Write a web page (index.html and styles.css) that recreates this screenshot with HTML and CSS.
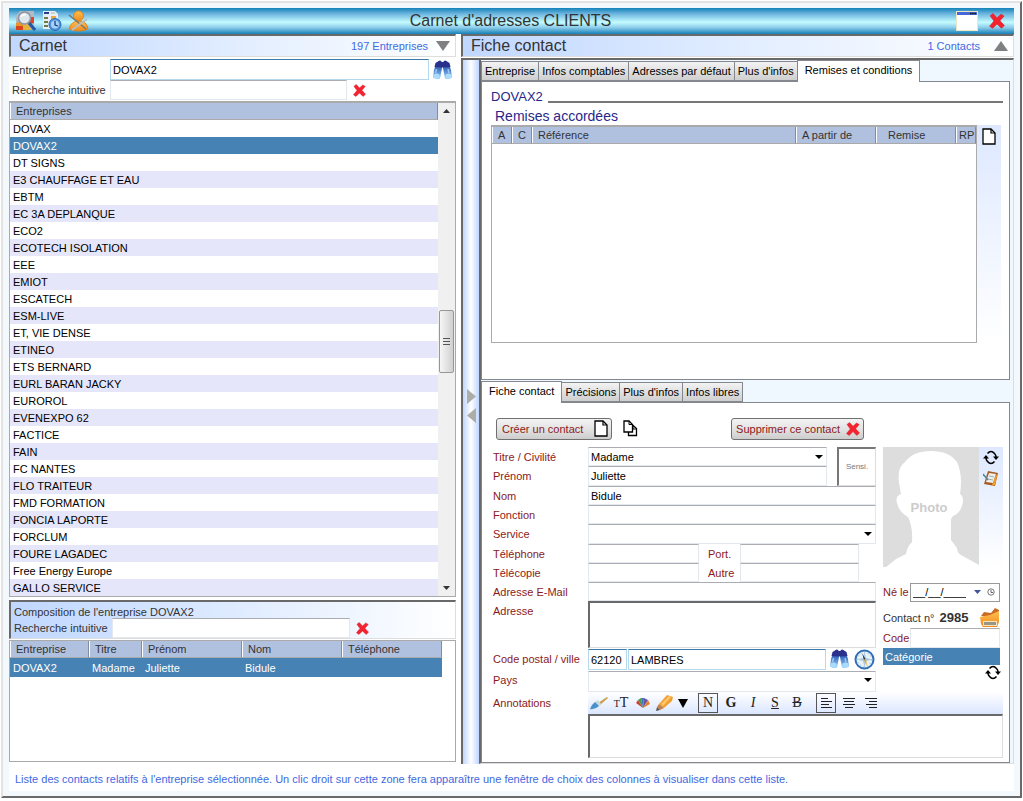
FILE: index.html
```html
<!DOCTYPE html>
<html lang="fr">
<head>
<meta charset="utf-8">
<title>Carnet d'adresses CLIENTS</title>
<link rel="stylesheet" href="styles.css">
</head>
<body>
<svg class="defs" aria-hidden="true">
  <defs>
    <linearGradient id="lens" x1="0" y1="0" x2="0" y2="1"><stop offset="0" stop-color="#2b3f9a"/><stop offset=".45" stop-color="#3f74c4"/><stop offset="1" stop-color="#a5d8fa"/></linearGradient>
    <linearGradient id="gold" x1="0" y1="0" x2="0" y2="1"><stop offset="0" stop-color="#ffc050"/><stop offset="1" stop-color="#f08a1c"/></linearGradient>
    <symbol id="i-cross" viewBox="0 0 14 14"><path d="M1 2.5 3.5 0.5 7 4.2 10.5 1 13.2 2.6 9.6 6.8 13.5 11 10.8 13.4 7 9.6 3.2 13.4 0.5 11.6 4.3 7Z" fill="#f5222f" stroke="#d5202a" stroke-width=".5"/></symbol>
    <symbol id="i-binoculars" viewBox="0 0 20 20"><path d="M4 3 8 .5 9.500 3V8L7.500 18.500Q4.500 20 .5 17.500L1.500 10Z" fill="url(#lens)"/><path d="M16 3 12 .5 10.500 3V8L12.500 18.500Q15.500 20 19.500 17.500L18.500 10Z" fill="url(#lens)"/><path d="M3 3 7 .5 9.500 2H10.500L13 .5 17 3 18 7 11 7.500H9L2 7Z" fill="#29318c"/><ellipse cx="4" cy="16" rx="3.200" ry="2.600" fill="#a9dcfa"/><ellipse cx="16" cy="16" rx="3.200" ry="2.600" fill="#a9dcfa"/><path d="M4 9 3 13M15.500 9 16.500 13" stroke="#9ec8ee" stroke-width="1.500"/></symbol>
    <symbol id="i-page" viewBox="0 0 14 17"><path d="M1 1H9L13 5V16H1Z" fill="#fff" stroke="#000" stroke-width="1.300"/><path d="M9 1V5H13" fill="none" stroke="#000" stroke-width="1.200"/></symbol>
    <symbol id="i-refresh" viewBox="0 0 16 15"><path d="M4.500 3.500Q8-.5 11.500 3.500Q13 5 13 7M11.500 11.500Q8 15.500 4.500 11.500Q3 10 3 8" fill="none" stroke="#000" stroke-width="1.600"/><path d="M10 6.500H16L13 10ZM0 8.500H6L3 5Z" fill="#000"/></symbol>
    <symbol id="i-up" viewBox="0 0 14 10"><path d="M7 0 14 10H0Z" fill="#808080"/></symbol>
  </defs>
</svg>

<main class="window">
  <header class="titlebar">
    <div class="tools">
      <button class="icon-btn" type="button" aria-label="Aperçu"><svg width="21" height="22" viewBox="0 0 21 22"><path d="M5 1H19V19H1V6Z" fill="#b4bac3"/><path d="M1 13 7 11 9 19H1Z" fill="#e89530"/><path d="M1 16H8L9 20H1Z" fill="#d9441d"/><path d="M14 7H19V13L15 14Z" fill="#e0452b"/><path d="M8 15 14 13 16 20H8Z" fill="#e8b33d"/><circle cx="9.500" cy="8" r="6" fill="#dfe6ec" stroke="#8b949f" stroke-width="1.500"/><path d="M6 7Q7 4 11 5" fill="none" stroke="#fff" stroke-width="1.500"/><path d="M14 13 20 20" stroke="#2256a8" stroke-width="3"/></svg></button>
      <button class="icon-btn" type="button" aria-label="Historique"><svg width="20" height="22" viewBox="0 0 20 22"><path d="M1 1H13L16 4V19H1Z" fill="#e8eef3"/><path d="M2 3H7" stroke="#233f94" stroke-width="2"/><path d="M9 3H13" stroke="#a9b4c0"/><path d="M2 8H6M2 12H6M2 16H6" stroke="#6c7c43" stroke-width="2"/><path d="M9 6H14V9H9Z" fill="#f0a834"/><circle cx="13" cy="14.500" r="6" fill="#4f93dc" stroke="#2c6cbb"/><circle cx="13" cy="14.500" r="4" fill="#a8d2f6"/><path d="M13 11V15L16 16" fill="none" stroke="#173f85" stroke-width="1.300"/></svg></button>
      <button class="icon-btn" type="button" aria-label="Paramètres du contact"><svg width="21" height="22" viewBox="0 0 21 22"><path d="M1 19Q3 11 11 11Q19 11 20 19Q11 23 1 19Z" fill="url(#gold)" stroke="#dc8519"/><circle cx="10.500" cy="6" r="5" fill="url(#gold)" stroke="#dc8519"/><path d="M1 5 18 19" stroke="#70757b" stroke-width="1.500"/><path d="M19 9 4 20" stroke="#b9bec3" stroke-width="2"/></svg></button>
    </div>
    <h1>Carnet d'adresses CLIENTS</h1>
    <div class="tools tools-end">
      <button class="icon-btn" type="button" aria-label="Agrandir"><svg width="22" height="20" viewBox="0 0 22 20"><path d="M0 0H22V20H0Z" fill="#ece6c6"/><path d="M1 4H21V19H1Z" fill="#fff"/><path d="M1 1H21V4H1Z" fill="#4468d8"/><path d="M14 2.500H20" stroke="#111" stroke-width="1.500" stroke-dasharray="1.500 .7"/></svg></button>
      <button class="icon-btn" type="button" aria-label="Fermer"><svg width="18" height="16"><use href="#i-cross" width="18" height="16"/></svg></button>
    </div>
  </header>

  <div class="columns">
    <section class="left">
      <div class="section-head"><h2>Carnet</h2><span class="count">197 Entreprises</span><svg class="flip" width="14" height="10"><use href="#i-up"/></svg></div>
      <div class="search-row"><label for="ent">Entreprise</label><input id="ent" class="focus" value="DOVAX2"><button class="icon-btn" type="button" aria-label="Rechercher"><svg width="21" height="20"><use href="#i-binoculars"/></svg></button></div>
      <div class="search-row short"><label for="rech">Recherche intuitive</label><input id="rech"><button class="icon-btn" type="button" aria-label="Effacer"><svg width="13" height="13"><use href="#i-cross"/></svg></button></div>

      <div class="list-frame">
        <table class="companies">
          <thead><tr><th>Entreprises</th></tr></thead>
          <tbody>
            <tr><td>DOVAX</td></tr><tr class="selected"><td>DOVAX2</td></tr><tr><td>DT SIGNS</td></tr><tr><td>E3 CHAUFFAGE ET EAU</td></tr><tr><td>EBTM</td></tr><tr><td>EC 3A DEPLANQUE</td></tr><tr><td>ECO2</td></tr><tr><td>ECOTECH ISOLATION</td></tr><tr><td>EEE</td></tr><tr><td>EMIOT</td></tr><tr><td>ESCATECH</td></tr><tr><td>ESM-LIVE</td></tr><tr><td>ET, VIE DENSE</td></tr><tr><td>ETINEO</td></tr><tr><td>ETS BERNARD</td></tr><tr><td>EURL BARAN JACKY</td></tr><tr><td>EUROROL</td></tr><tr><td>EVENEXPO 62</td></tr><tr><td>FACTICE</td></tr><tr><td>FAIN</td></tr><tr><td>FC NANTES</td></tr><tr><td>FLO TRAITEUR</td></tr><tr><td>FMD FORMATION</td></tr><tr><td>FONCIA LAPORTE</td></tr><tr><td>FORCLUM</td></tr><tr><td>FOURE LAGADEC</td></tr><tr><td>Free Energy Europe</td></tr><tr><td>GALLO SERVICE</td></tr>
          </tbody>
        </table>
        <div class="scrollbar">
          <svg width="7" height="4" viewBox="0 0 7 4"><path d="M3.500 0 7 4H0Z" fill="#333"/></svg>
          <div class="track"><div class="thumb"><i></i><i></i><i></i></div></div>
          <svg width="7" height="4" viewBox="0 0 7 4"><path d="M3.500 4 7 0H0Z" fill="#333"/></svg>
        </div>
      </div>

      <div class="composition">
        <p>Composition de l'entreprise DOVAX2</p>
        <div class="search-row short"><label for="rech2">Recherche intuitive</label><input id="rech2"><button class="icon-btn" type="button" aria-label="Effacer"><svg width="13" height="13"><use href="#i-cross"/></svg></button></div>
      </div>
      <div class="people-frame">
        <table class="people">
          <thead><tr><th class="w-company">Entreprise</th><th class="w-title">Titre</th><th>Prénom</th><th>Nom</th><th>Téléphone</th></tr></thead>
          <tbody><tr class="selected"><td>DOVAX2</td><td>Madame</td><td>Juliette</td><td>Bidule</td><td></td></tr></tbody>
        </table>
      </div>
    </section>

    <section class="right">
      <div class="section-head"><h2>Fiche contact</h2><span class="count">1 Contacts</span><svg width="14" height="10"><use href="#i-up"/></svg></div>
      <div class="right-body">
        <div class="splitter"><svg width="9" height="34" viewBox="0 0 9 34"><path d="M0 0V15L9 7.500ZM9 19V34L0 26.500Z" fill="#acaca8"/></svg></div>
        <div class="panels">
          <div class="tabs" role="tablist">
            <button type="button" role="tab">Entreprise</button><button type="button" role="tab">Infos comptables</button><button type="button" role="tab">Adresses par défaut</button><button type="button" role="tab">Plus d'infos</button><button type="button" role="tab" class="active" aria-selected="true">Remises et conditions</button>
          </div>
          <div class="panel discounts">
            <h3 class="ruled">DOVAX2</h3>
            <h4>Remises accordées</h4>
            <div class="grid-area">
              <div class="grid-frame">
                <table class="grid">
                  <thead><tr><th class="w-flag">A</th><th class="w-flag">C</th><th>Référence</th><th class="w-num">A partir de</th><th class="w-num inset">Remise</th><th class="w-flag rp">RP</th></tr></thead>
                </table>
              </div>
              <div class="side-strip"><button class="icon-btn" type="button" aria-label="Nouvelle remise"><svg width="14" height="17"><use href="#i-page"/></svg></button></div>
            </div>
          </div>

          <div class="tabs" role="tablist">
            <button type="button" role="tab" class="active" aria-selected="true">Fiche contact</button><button type="button" role="tab">Précisions</button><button type="button" role="tab">Plus d'infos</button><button type="button" role="tab">Infos libres</button>
          </div>
          <div class="panel contact">
            <div class="actions">
              <button type="button" class="action">Créer un contact<svg width="14" height="17"><use href="#i-page"/></svg></button>
              <button type="button" class="icon-btn" aria-label="Dupliquer"><svg width="15" height="17" viewBox="0 0 15 17"><path d="M5.500 5.500H10L13.500 8.500V15.500H5.500Z" fill="#fff" stroke="#000" stroke-width="1.300"/><path d="M1 1H6L9.500 4.500V12H1Z" fill="#fff" stroke="#000" stroke-width="1.300"/><path d="M6 1V4.500H9.500M10 5.500V9H13.500" fill="none" stroke="#000"/></svg></button>
              <button type="button" class="action delete">Supprimer ce contact<svg width="14" height="14"><use href="#i-cross"/></svg></button>
            </div>

            <div class="card">
              <div class="fields">
                <label for="titre">Titre / Civilité</label><span class="pick civility"><select id="titre"><option>Madame</option></select></span>
                <button type="button" class="sensi">Sensi.</button>
                <label for="prenom">Prénom</label><input id="prenom" class="civility" value="Juliette">
                <label for="nom">Nom</label><input id="nom" class="full" value="Bidule">
                <label for="fonction">Fonction</label><input id="fonction" class="full">
                <label for="service">Service</label><span class="pick full"><select id="service"><option></option></select></span>
                <label for="tel">Téléphone</label><div class="phones full"><input id="tel"><label for="port">Port.</label><input id="port"></div>
                <label for="fax">Télécopie</label><div class="phones full"><input id="fax"><label for="autre">Autre</label><input id="autre"></div>
                <label for="mail">Adresse E-Mail</label><input id="mail" class="full" type="email">
                <label for="adresse">Adresse</label><textarea id="adresse" class="full"></textarea>
                <label for="cp">Code postal / ville</label>
                <div class="town full"><input id="cp" class="focus zip" value="62120"><input class="focus" aria-label="Ville" value="LAMBRES">
                  <button class="icon-btn" type="button" aria-label="Rechercher la ville"><svg width="21" height="20"><use href="#i-binoculars"/></svg></button>
                  <button class="icon-btn" type="button" aria-label="Itinéraire"><svg width="21" height="21" viewBox="0 0 21 21"><circle cx="10.500" cy="10.500" r="9" fill="#e7f2f8" stroke="#2f6eb5" stroke-width="2"/><circle cx="10.500" cy="10.500" r="7" fill="none" stroke="#85acd2" stroke-dasharray="1 2.600"/><path d="M10.500 3 12 9 18 10.500 12 12 10.500 18 9 12 3 10.500 9 9Z" fill="#a9c7de"/><path d="M8 4 11.500 10 10 11Z" fill="#334"/><path d="M13 17 10 11 12 10Z" fill="#e5a52a"/></svg></button></div>
                <label for="pays">Pays</label><span class="pick full country"><select id="pays"><option></option></select></span>
              </div>

              <aside class="side">
                <div class="photo-row">
                  <svg class="photo" width="96" height="120" viewBox="0 0 96 120" role="img" aria-label="Photo"><path d="M0 0H96V118L78 108Q74 106 74 101L68 93V72L70 69Q78 66 80 55Q80 48 77 47Q80 28 74 15Q66 4 48 4Q30 4 22 15Q14 20 16 36L18 47Q12 49 14 56Q16 65 25 70Q30 80 29 95Q24 100 23 107L13 112L3 120H0Z" fill="#ddd"/><text x="46" y="65" text-anchor="middle">Photo</text></svg>
                  <div class="side-strip">
                    <button class="icon-btn" type="button" aria-label="Actualiser"><svg width="16" height="15"><use href="#i-refresh"/></svg></button>
                    <button class="icon-btn" type="button" aria-label="Coller"><svg width="16" height="16" viewBox="0 0 16 16"><path d="M5 0 15 2 12 15 1 13Z" fill="#a85a22"/><path d="M6 2 13 3 10 12 3 11Z" fill="#eef0ef"/><path d="M10 12 13 3 14 5 12 14 8 15Z" fill="#eea02c"/><path d="M6 5 11 6M5 8 10 9" stroke="#a6a9ac"/><path d="M0 3 5 9" stroke="#4f86a1" stroke-width="1.500"/></svg></button>
                  </div>
                </div>
                <div class="side-row born"><label for="ne">Né le</label><span class="date"><input id="ne" value="__/__/____"><svg width="7" height="4" viewBox="0 0 7 4"><path d="M0 0H7L3.500 4Z" fill="#44549a"/></svg><svg width="8" height="8" viewBox="0 0 8 8"><circle cx="4" cy="4" r="3.200" fill="#fff" stroke="#777"/><path d="M4 2V4.500H6" fill="none" stroke="#666"/></svg></span></div>
                <div class="side-row number"><span>Contact n°</span><strong>2985</strong><button class="icon-btn" type="button" aria-label="Code-barres"><svg width="20" height="20" viewBox="0 0 20 20"><path d="M1 8 4 4 11 5 15 0 19 2V10Z" fill="#c96b25"/><path d="M0 9 10 7 19 3V14L17 19H3L1 16Z" fill="url(#gold)"/><path d="M3 13H17V18H3Z" fill="#f3e4c4"/><path d="M5 14V17M7 14V17M9 14V17M11 14V17M13 14V17M15 14V17" stroke="#444"/></svg></button></div>
                <div class="side-row code"><label for="code">Code</label><input id="code"></div>
                <div class="category">Catégorie</div>
                <button class="icon-btn reload" type="button" aria-label="Actualiser les catégories"><svg width="16" height="15"><use href="#i-refresh"/></svg></button>
              </aside>
            </div>

            <div class="notes">
              <label for="notes">Annotations</label>
              <div class="editor">
                <div class="toolbar">
                  <button type="button" aria-label="Pinceau"><svg width="18" height="14" viewBox="0 0 18 14"><path d="M8 7 17 1 18 2 10 9Z" fill="#c9a04a"/><path d="M5 6 8 4 11 8 8 11Z" fill="#ccdbe2"/><path d="M5 6 9 10Q5 14 0 13L2 9Z" fill="#4b92cb"/></svg></button>
                  <button type="button" aria-label="Police" class="size"><small>T</small>T</button>
                  <button type="button" aria-label="Couleur"><svg width="14" height="10" viewBox="0 0 14 10"><path d="M7 10 0 5 2 2Z" fill="#cf3d32"/><path d="M7 10 2 2 5 0Z" fill="#4e9945"/><path d="M7 10 5 0H8Z" fill="#3577c4"/><path d="M7 10 8 0 12 2Z" fill="#6a54a7"/><path d="M7 10 12 2 14 6Z" fill="#e28130"/></svg></button>
                  <button type="button" aria-label="Surligneur"><svg width="18" height="16" viewBox="0 0 18 16"><path d="M3 9 11 0 17 2 16 6 8 13Z" fill="#f2a034"/><path d="M5 9 13 1 15 2 7 11Z" fill="#ffc56b"/><path d="M3 9 8 13 4 15 1 12Z" fill="#c58445"/><path d="M1 12 4 15 0 16Z" fill="#565656"/></svg></button>
                  <button type="button" aria-label="Autres couleurs" class="drop"><svg width="10" height="9" viewBox="0 0 10 9"><path d="M0 0H10L5 9Z"/></svg></button>
                  <button type="button" class="boxed">N</button><button type="button"><b>G</b></button><button type="button"><i>I</i></button><button type="button"><u>S</u></button><button type="button"><s>B</s></button>
                  <button type="button" class="boxed" aria-label="Aligner à gauche"><svg width="11" height="10" viewBox="0 0 11 10"><path d="M0 .5H7M0 3.500H11M0 6.500H8M0 9.500H11" stroke="#222"/></svg></button>
                  <button type="button" aria-label="Centrer"><svg width="12" height="10" viewBox="0 0 12 10"><path d="M0 .5H12M1 3.500H11M0 6.500H12M2 9.500H10" stroke="#222"/></svg></button>
                  <button type="button" aria-label="Aligner à droite"><svg width="12" height="10" viewBox="0 0 12 10"><path d="M0 .5H12M4 3.500H12M1 6.500H12M4 9.500H12" stroke="#222"/></svg></button>
                </div>
                <textarea id="notes"></textarea>
              </div>
            </div>
          </div>
        </div>
      </div>
    </section>
  </div>
  <footer class="hint">Liste des contacts relatifs à l'entreprise sélectionnée. Un clic droit sur cette zone fera apparaître une fenêtre de choix des colonnes à visualiser dans cette liste.</footer>
</main>
</body>
</html>
```
FILE: styles.css
```css
* { box-sizing: border-box; }
body { margin: 0; background: #fff; color: #333; font: 11px/14px "Liberation Sans", Arial, sans-serif; }
h1, h2, h3, h4, p { margin: 0; font-weight: normal; }
svg { display: block; flex: none; }
.defs { position: absolute; width: 0; height: 0; }
button, input, select, textarea { font: inherit; margin: 0; border-radius: 0; }
.icon-btn { display: flex; flex: none; padding: 0; border: 0; background: none; }

.window { margin: 1px; padding: 5px 6px; background: #f3f8fc; border: 2px solid #e3e3e3; border-right-color: #696969; border-bottom-color: #696969; }
.titlebar { display: grid; grid-template-columns: 1fr auto 1fr; align-items: center; height: 26px; padding: 0 8px 0 6px; background: linear-gradient(#1382b8, #6bb4de 22%, #c4fbff 55%, #8dcdea 75%, #1580b8); }
.titlebar h1 { font-size: 16px; line-height: 20px; }
.tools { display: flex; align-items: center; gap: 6px; }
.tools-end { justify-content: flex-end; gap: 10px; }
.columns { display: grid; grid-template-columns: minmax(0, 447fr) minmax(0, 553fr); gap: 5px; background: #fff; }

.section-head { display: flex; align-items: center; height: 23px; padding: 0 5px 0 8px; border: solid #696969; border-width: 2px 1px 1px 2px; border-right-color: #ddd; border-bottom-color: #ddd; background: linear-gradient(90deg, #c0d7ff, #dbe9ff 40%, #fff); }
.section-head h2 { flex: 1; font-size: 16px; line-height: 20px; }
.count { margin-right: 8px; color: #4169e1; }
.right .count { margin-right: 14px; }
.flip { transform: rotate(180deg); }

input, textarea { width: 100%; min-width: 0; padding: 0 2px; border: 1px solid #e2e8ee; border-top-color: #abadb3; background: #fff; color: #000; outline: 0; }
input { height: 100%; }
textarea { display: block; resize: none; border: solid #696969; border-width: 2px 1px 1px 2px; border-right-color: #ddd; border-bottom-color: #ddd; }
.focus { border-color: #3d7bad #b5daee #b5daee; }

.left { display: flex; flex-direction: column; }
.search-row { display: flex; align-items: center; gap: 3px; height: 21px; padding: 0 3px; }
.search-row label { flex: none; width: 95px; }
.left > .section-head { margin-bottom: 2px; }
.short { height: 20px; padding-right: 90px; }
.short input { margin-right: 3px; }

.list-frame { display: flex; margin-top: 1px; border: solid #aaa; border-width: 2px 1px 1px; }
table { border-collapse: separate; border-spacing: 0; width: 100%; table-layout: fixed; }
th, td { padding: 0 3px; text-align: left; font-weight: normal; white-space: nowrap; overflow: hidden; }
th { height: 17px; padding-left: 6px; background: #b0c1e0; border-right: 1px solid #858b9b; border-bottom: 1px solid #aaa; box-shadow: inset 1px 0 #fff; }
td { height: 17px; color: #000; }
.companies tbody tr:nth-child(even) td { background: #e6e6fa; }
tbody tr.selected td, .companies tbody tr.selected td { background: #4682b4; color: #fff; }
.scrollbar { display: flex; flex: none; flex-direction: column; align-items: center; width: 17px; padding: 6px 0; background: #f0f0f0; }
.track { display: flex; flex: 1; flex-direction: column; width: 15px; padding-top: 197px; }
.thumb { display: flex; flex-direction: column; align-items: center; justify-content: center; gap: 2px; height: 63px; border: 1px solid #979797; border-radius: 2px; background: linear-gradient(90deg, #f6f6f6, #d0d0d2); }
.thumb i { width: 7px; height: 1px; background: #555; }

.composition { height: 39px; margin-top: 3px; padding: 3px 0 0; border: solid #696969; border-width: 2px 1px 1px 2px; border-right-color: #ddd; border-bottom-color: #ddd; background: linear-gradient(90deg, #c0d7ff, #dbe9ff 45%, #fff); }
.composition p { height: 13px; padding-left: 3px; }
.composition .short { padding-right: 86px; }
.people-frame { flex: 1; min-height: 122px; margin: 1px 0 2px; padding-right: 13px; border: 1px solid #aaa; }
.people td { height: 19px; }
.w-company { width: 79px; }
.w-title { width: 53px; }

.right { display: flex; flex-direction: column; }
.right-body { display: flex; flex: 1; margin-top: 1px; }
.splitter { display: flex; flex: none; align-items: center; justify-content: center; width: 18px; padding-bottom: 12px; border: solid #696969; border-width: 2px 0 0 2px; background: linear-gradient(90deg, #c0d6ff, #fff 50%, #bfd6ff); }
.panels { display: flex; flex: 1; flex-direction: column; min-width: 0; padding-right: 3px; border: solid #696969; border-width: 2px 1px 1px 2px; border-right-color: #ddd; border-bottom-color: #ddd; background: #f0f8ff; }
.tabs { display: flex; flex: none; align-items: flex-end; height: 21px; }
.tabs button { height: 20px; margin-right: -1px; padding: 0 3px; border: 1px solid #85878f; background: linear-gradient(#f3f3f3, #ddd 60%, #cfcfcf); color: #000; white-space: nowrap; }
.tabs .active { z-index: 1; height: 22px; margin-bottom: -1px; padding: 0 7px 3px; border-bottom: 0; background: #fff; position: relative; }
.panel { border: 1px solid #85878f; background: #fff; }
.discounts { display: flex; flex: 1; flex-direction: column; min-height: 297px; margin-bottom: 1px; padding: 7px 6px 36px 9px; }
.ruled { display: flex; align-items: center; gap: 5px; height: 16px; color: #27278a; font-size: 13px; line-height: 16px; }
.ruled::after { content: ""; flex: 1; height: 2px; margin-top: 9px; background: #777; }
.discounts h4 { padding: 2px 0 0 4px; color: #27278a; font-size: 14px; line-height: 18px; }
.grid-area { display: flex; flex: 1; padding-right: 2px; }
.grid-frame { flex: 1; border: solid #aaa; border-width: 2px 1px 1px; }
.w-flag { width: 20px; }
.w-num { width: 80px; }
.grid .inset { padding-left: 12px; }
.grid .rp { padding: 0 0 0 3px; }
.side-strip { display: flex; flex-direction: column; align-items: center; gap: 6px; width: 24px; padding-top: 3px; background: linear-gradient(#dde8ff, #fff); }

.contact { padding: 14px 6px 4px 11px; }
.actions { display: flex; align-items: center; gap: 11px; height: 23px; padding-left: 3px; }
.action { display: flex; align-items: center; gap: 11px; height: 22px; padding: 0 3px 0 5px; border: 1px solid #707070; border-radius: 3px; background: linear-gradient(#f3f3f3, #e5e5e5 45%, #cdcdcd); color: #8b1a1a; }
.delete { gap: 6px; margin: 0 139px 0 auto; padding-left: 4px; }
label { color: #8b1a1a; }
.search-row label { color: #333; }
.card { display: flex; justify-content: space-between; gap: 7px; padding-top: 7px; }
.fields { display: grid; flex: 1; grid-template-columns: 95px minmax(0, 1fr) 39px; grid-template-rows: 19px 20px 19px 19px 20px 19px 19px 19px 48px 21px 22px; }
.fields > label { padding-top: 3px; }
.full { grid-column: 2 / 4; }
.civility { width: auto; margin-right: 10px; }
.sensi { grid-column: 3; grid-row: 1 / 3; padding: 0; border: solid #777; border-width: 2px 1px 1px 2px; border-right-color: #ddd; border-bottom-color: #ddd; background: #fff; color: #777; font-size: 8px; }
.pick { position: relative; display: flex; }
.pick select { appearance: none; flex: 1; padding: 0 2px; border: 1px solid #e2e8ee; border-top-color: #abadb3; background: #fff; color: #000; }
.pick::after { content: ""; position: absolute; right: 4px; top: 8px; border: 4px solid transparent; border-top-color: #000; border-bottom: 0; }
.phones { display: grid; grid-template-columns: 111px 41px minmax(0, 1fr); padding-right: 17px; }
.phones label { padding: 3px 0 0 9px; }
#adresse { height: 47px; }
.town { display: flex; gap: 1px; }
.town input { flex: 1; }
.town .zip { flex: 0 0 39px; }
.town .icon-btn { width: 24px; justify-content: center; }
.country { padding-top: 1px; }

.side { flex: none; width: 120px; }
.photo-row { display: flex; height: 121px; }
.photo text { fill: #ccc; font-size: 13px; font-weight: bold; }
.side-row { display: flex; align-items: center; height: 20px; padding-right: 3px; }
.side-row label { flex: none; width: 27px; }
.born { margin-top: 14px; }
.date { display: flex; flex: 1; align-items: center; gap: 6px; height: 19px; padding-right: 4px; border: 1px solid #999; }
.date input { border: 0; }
.number { gap: 5px; height: 26px; padding-top: 6px; color: #333; }
.number strong { flex: 1; font-size: 13px; }
.category { height: 17px; margin-right: 3px; padding: 2px; background: #4682b4; color: #fff; }
.reload { margin: 0 2px 0 auto; }

.notes { display: flex; }
.notes > label { flex: none; width: 95px; padding-top: 4px; }
.editor { flex: 1; min-width: 0; }
.toolbar { display: flex; align-items: center; height: 22px; background: linear-gradient(#fff, #dbe6ff); }
.toolbar button { display: flex; align-items: center; justify-content: center; width: 22px; height: 20px; padding: 0; border: 0; background: none; color: #222; font: 14px/18px "Liberation Serif", "Times New Roman", serif; }
.toolbar .drop { width: 14px; }
.toolbar .boxed { width: 20px; margin: 0 2px 0 8px; border: 1px solid #555; }
.toolbar .size small { font-size: 10px; align-self: flex-end; }
.editor textarea { height: 44px; }
.hint { padding: 8px 6px 5px; background: #fff; color: #4169e1; }
```
